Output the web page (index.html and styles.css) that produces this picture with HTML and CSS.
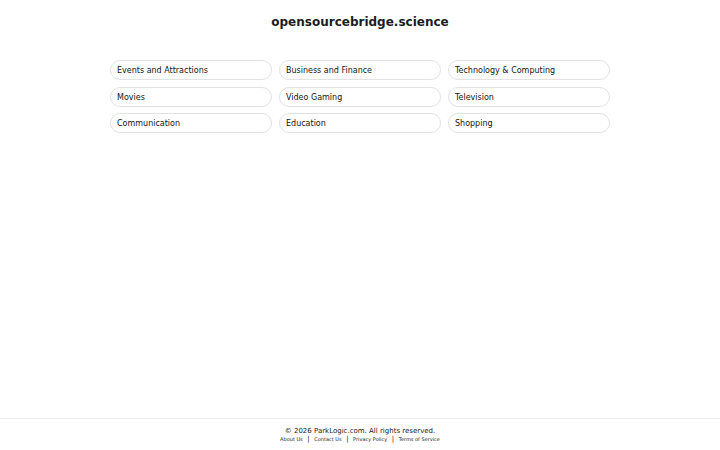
FILE: index.html
```html
<!DOCTYPE html>
<html lang="en">
<head>
    <meta charset="UTF-8">
    <meta name="viewport" content="width=device-width, initial-scale=1.0">
    <title>opensourcebridge.science</title>
    <link rel="stylesheet" href="styles.css">
</head>
<body>
    <div id="page">
        <header class="site-header">
            <h1>opensourcebridge.science</h1>
        </header>

        <!-- Related categories -->
        <main class="links">
            <a class="pill" href="#">Events and Attractions</a>
            <a class="pill" href="#">Business and Finance</a>
            <a class="pill" href="#">Technology &amp; Computing</a>
            <a class="pill" href="#">Movies</a>
            <a class="pill" href="#">Video Gaming</a>
            <a class="pill" href="#">Television</a>
            <a class="pill" href="#">Communication</a>
            <a class="pill" href="#">Education</a>
            <a class="pill" href="#">Shopping</a>
        </main>

        <footer class="site-footer">
            <p class="copyright">&copy; 2026 ParkLogic.com. All rights reserved.</p>
            <nav class="footer-links">
                <a href="#">About Us</a>
                <span class="sep">|</span>
                <a href="#">Contact Us</a>
                <span class="sep">|</span>
                <a href="#">Privacy Policy</a>
                <span class="sep">|</span>
                <a href="#">Terms of Service</a>
            </nav>
        </footer>
    </div>
</body>
</html>
```

FILE: styles.css
```css
/* Reset margin for body */
body {
    margin: 0;
    font-family: "DejaVu Sans", sans-serif;
    color: #1a1a1a;
    background-color: #fff;
}

#page {
    display: flex;
    flex-direction: column;
    min-height: 100vh;
}

.site-header {
    text-align: center;
    padding-top: 15px;
}

.site-header h1 {
    margin: 0;
    font-size: 12px;
    line-height: 15px;
    font-weight: bold;
    color: #1c1c24;
}

/* Three column grid of pills */
.links {
    display: grid;
    grid-template-columns: repeat(3, 162px);
    column-gap: 7px;
    row-gap: 6.5px;
    justify-content: center;
    margin-top: 30px;
    flex: 1;
    align-content: start;
}

.pill {
    display: block;
    height: 20px;
    line-height: 19px;
    padding: 0 6px;
    border: 1px solid #e2e2e2;
    border-radius: 10px;
    box-sizing: border-box;
    font-size: 8px;
    color: #151515;
    text-decoration: none;
}

.site-footer {
    border-top: 1px solid #eeeeee;
    text-align: center;
    padding: 8px 0 7px;
}

.copyright {
    margin: 0;
    font-size: 7px;
    line-height: 8px;
    color: #222;
}

.footer-links {
    margin-top: 0;
    font-size: 5px;
    color: #222;
}

.footer-links a {
    color: #222;
    text-decoration: none;
}

.footer-links .sep {
    margin: 0 3px;
    font-size: 7px;
}
```
